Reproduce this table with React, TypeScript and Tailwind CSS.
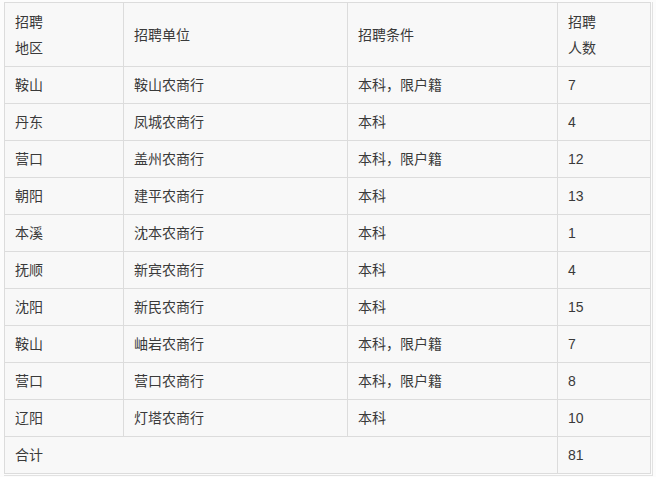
const rows: [string, string, string, string][] = [
  ["鞍山", "鞍山农商行", "本科，限户籍", "7"],
  ["丹东", "凤城农商行", "本科", "4"],
  ["营口", "盖州农商行", "本科，限户籍", "12"],
  ["朝阳", "建平农商行", "本科", "13"],
  ["本溪", "沈本农商行", "本科", "1"],
  ["抚顺", "新宾农商行", "本科", "4"],
  ["沈阳", "新民农商行", "本科", "15"],
  ["鞍山", "岫岩农商行", "本科，限户籍", "7"],
  ["营口", "营口农商行", "本科，限户籍", "8"],
  ["辽阳", "灯塔农商行", "本科", "10"],
];

const cell = "border border-[#dcdcdc] px-[10px] py-0 align-middle text-left font-normal";

export default function App() {
  return (
    <div
      className="w-[656px] h-[477px] bg-[#fcfcfc] pt-[2px] pl-[4px]"
      style={{ fontFamily: '"Liberation Sans", "Noto Sans CJK SC", sans-serif' }}
    >
      <div className="w-fit border-r border-b border-[#e2e2e2] pr-[1px] pb-[1px]">
        <table className="w-[646px] border-collapse table-fixed bg-[#f8f8f8] text-[14px] leading-[26px] text-[#3a3a3a]">
          <colgroup>
            <col className="w-[119px]" />
            <col className="w-[224px]" />
            <col className="w-[210px]" />
            <col className="w-[93px]" />
          </colgroup>
          <thead>
            <tr className="h-[64px]">
              <th className={cell}>
                招聘
                <br />
                地区
              </th>
              <th className={cell}>招聘单位</th>
              <th className={cell}>招聘条件</th>
              <th className={cell}>
                招聘
                <br />
                人数
              </th>
            </tr>
          </thead>
          <tbody>
            {rows.map((r, i) => (
              <tr key={i} className="h-[37px]">
                <td className={cell}>{r[0]}</td>
                <td className={cell}>{r[1]}</td>
                <td className={cell}>{r[2]}</td>
                <td className={cell}>{r[3]}</td>
              </tr>
            ))}
            <tr className="h-[37px]">
              <td className={cell} colSpan={3}>
                合计
              </td>
              <td className={cell}>81</td>
            </tr>
          </tbody>
        </table>
      </div>
    </div>
  );
}
